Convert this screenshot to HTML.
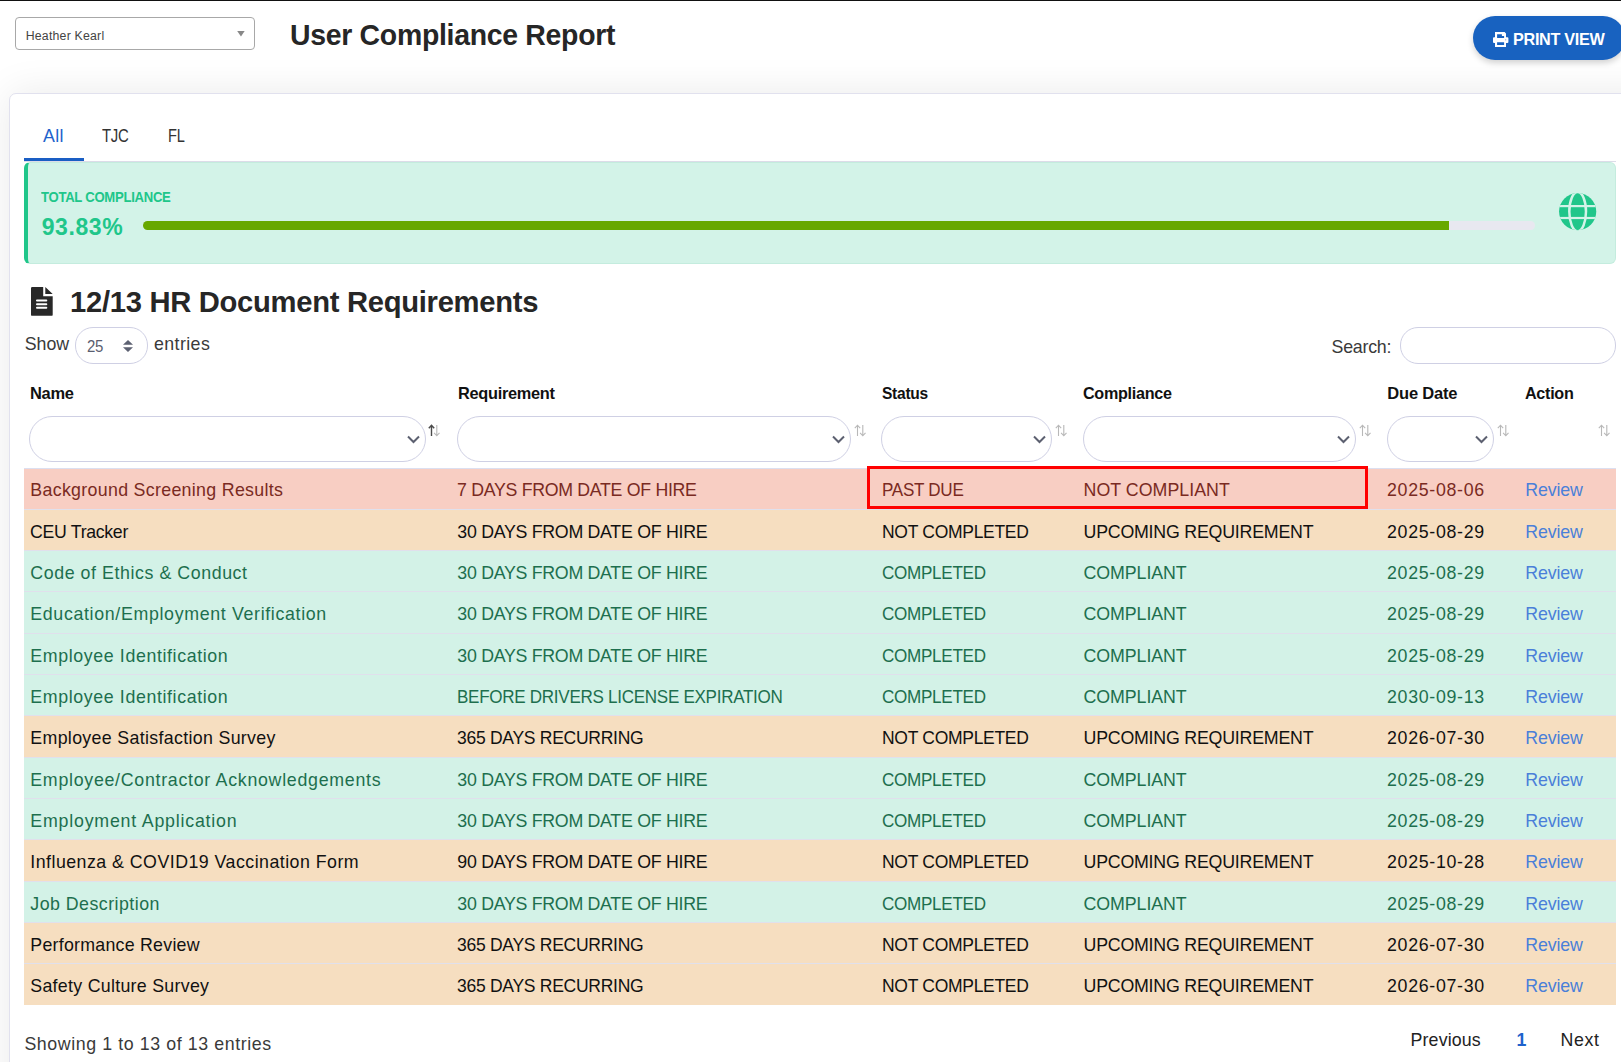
<!DOCTYPE html>
<html><head><meta charset="utf-8"><title>User Compliance Report</title>
<style>
html,body{margin:0;padding:0;}
body{width:1621px;height:1062px;position:relative;overflow:hidden;background:#fff;font-family:"Liberation Sans", sans-serif;}
.t{position:absolute;white-space:nowrap;line-height:1;}
</style></head><body>
<div style="position:absolute;left:0;top:0;width:1621px;height:1px;background:#111"></div>
<div style="position:absolute;left:9px;top:93px;width:1660px;height:1100px;border:1px solid #e1e1ee;border-radius:7px;background:#fff;box-shadow:0 0 40px rgba(0,0,0,0.085)"></div>
<div style="position:absolute;left:15px;top:17px;width:238px;height:31px;border:1px solid #a8a8a8;border-radius:4px;background:#fff"></div>
<div class="t" style="left:25.70px;top:30px;font-size:12.3px;color:#444;letter-spacing:0.217px;">Heather Kearl</div>
<svg style="position:absolute;left:236px;top:30px" width="10" height="8" viewBox="0 0 10 8"><path d="M1.2 1.1H8.7L4.95 6.4Z" fill="#888"/></svg>
<div class="t" style="left:290.40px;top:20px;font-size:29.6px;color:#262626;font-weight:bold;letter-spacing:-0.300px;transform:scaleX(0.9599);transform-origin:0.00px 0;">User Compliance Report</div>
<div style="position:absolute;left:1473px;top:16px;width:152px;height:44px;border-radius:22px;background:#1862c0;box-shadow:0 3px 6px rgba(0,0,0,0.18)"></div>
<svg style="position:absolute;left:1492.8px;top:31.8px" width="16" height="15" viewBox="0 0 16 15">
<path fill="#fff" fill-rule="evenodd" d="M2 0H11.6L13 1.4V5.3H14.4Q15.4 5.3 15.4 6.3V10.1Q15.4 11.1 14.4 11.1H13V15H2V11.1H1Q0 11.1 0 10.1V6.3Q0 5.3 1 5.3H2Z M4.1 2.2H8.9V4.1H11.1V6.1H4.1Z M4.1 10.3H11.1V13H4.1Z"/>
<circle cx="12.7" cy="7.8" r="0.6" fill="#7f9be0"/></svg>
<div class="t" style="left:1512.60px;top:31px;font-size:16.5px;color:#fff;font-weight:bold;letter-spacing:-0.300px;transform:scaleX(0.9818);transform-origin:0.00px 0;">PRINT VIEW</div>
<div class="t" style="left:43.10px;top:128px;font-size:17.8px;color:#1e62cc;letter-spacing:0.350px;">All</div>
<div class="t" style="left:102.20px;top:128px;font-size:17.8px;color:#333;letter-spacing:-0.300px;transform:scaleX(0.8393);transform-origin:0.00px 0;">TJC</div>
<div class="t" style="left:167.90px;top:128px;font-size:17.8px;color:#333;letter-spacing:-0.300px;transform:scaleX(0.8215);transform-origin:0.00px 0;">FL</div>
<div style="position:absolute;left:24px;top:161px;width:1592px;height:1px;background:#dcdce8"></div>
<div style="position:absolute;left:24px;top:158px;width:60px;height:3px;background:#1a5ec4"></div>
<div style="position:absolute;left:24px;top:162px;width:1592px;height:102px;box-sizing:border-box;background:#d3f3e8;border:1px solid #c4ecde;border-left:4px solid #20c68a;border-radius:6px"></div>
<div class="t" style="left:41.20px;top:190px;font-size:14.0px;color:#20c68a;font-weight:bold;letter-spacing:-0.300px;transform:scaleX(0.9365);transform-origin:0.00px 0;">TOTAL COMPLIANCE</div>
<div class="t" style="left:41.70px;top:216px;font-size:23.0px;color:#20c68a;font-weight:bold;letter-spacing:0.600px;">93.83%</div>
<div style="position:absolute;left:143px;top:221px;width:1392px;height:9px;border-radius:4.5px;background:#e8e8f0;overflow:hidden"><div style="width:1306px;height:9px;background:#67a800"></div></div>
<svg style="position:absolute;left:1558.8px;top:192.8px" width="38" height="38" viewBox="0 0 38 38">
<defs><clipPath id="gc"><circle cx="18.65" cy="18.6" r="18.6"/></clipPath></defs>
<g clip-path="url(#gc)">
<rect x="0" y="0" width="38" height="38" fill="#20c68a"/>
<ellipse cx="18.65" cy="18.6" rx="8.35" ry="19.6" fill="none" stroke="#d3f3e8" stroke-width="2.5"/>
<rect x="0" y="12.0" width="38" height="2.2" fill="#d3f3e8"/>
<rect x="0" y="23.9" width="38" height="2.2" fill="#d3f3e8"/>
</g></svg>
<svg style="position:absolute;left:31px;top:286.65px" width="22" height="29" viewBox="0 0 22 29">
<path fill="#282828" d="M0 1.2Q0 0 1.2 0H12.2V9.15H21.7V27.65Q21.7 28.85 20.5 28.85H1.2Q0 28.85 0 27.65Z M14.3 0L21.7 6.95H14.3Z"/>
<rect x="5" y="12.55" width="11.3" height="1.95" rx="0.95" fill="#fff"/>
<rect x="5" y="16.25" width="11.3" height="1.95" rx="0.95" fill="#fff"/>
<rect x="5" y="19.85" width="11.3" height="1.95" rx="0.95" fill="#fff"/>
</svg>
<div class="t" style="left:70.30px;top:287px;font-size:29.6px;color:#262626;font-weight:bold;letter-spacing:-0.300px;transform:scaleX(0.9865);transform-origin:0.00px 0;">12/13 HR Document Requirements</div>
<div class="t" style="left:24.70px;top:336px;font-size:17.8px;color:#3a3a3a;letter-spacing:-0.017px;">Show</div>
<div style="position:absolute;left:75px;top:327px;width:71px;height:35px;border:1px solid #cfd0e4;border-radius:18px;background:#fff"></div>
<div class="t" style="left:86.60px;top:338px;font-size:16.5px;color:#5a5e70;letter-spacing:-0.300px;transform:scaleX(0.9086);transform-origin:0.00px 0;">25</div>
<svg style="position:absolute;left:123px;top:340px" width="10" height="12" viewBox="0 0 10 12"><path fill="#5d6172" d="M5 0l5 4.8h-10z M0 7.2h10l-5 4.8z"/></svg>
<div class="t" style="left:153.90px;top:336px;font-size:17.8px;color:#3a3a3a;letter-spacing:0.425px;">entries</div>
<div class="t" style="left:1331.50px;top:339px;font-size:17.8px;color:#3a3a3a;letter-spacing:-0.225px;">Search:</div>
<div style="position:absolute;left:1400px;top:327px;width:214px;height:35px;border:1px solid #cfd0e4;border-radius:18px;background:#fff"></div>
<div class="t" style="left:30.40px;top:385px;font-size:16.5px;color:#111;font-weight:bold;letter-spacing:-0.300px;transform:scaleX(0.9966);transform-origin:0.00px 0;">Name</div>
<div style="position:absolute;left:29px;top:416px;width:395px;height:44px;border:1px solid #cfd0e4;border-radius:23px;background:#fff"></div>
<svg style="position:absolute;left:407px;top:435px" width="13" height="9" viewBox="0 0 13 9"><path d="M1 1.5l5.5 5.5 5.5-5.5" fill="none" stroke="#5c6070" stroke-width="2"/></svg>
<svg style="position:absolute;left:428px;top:424px" width="12" height="13" viewBox="0 0 12 13"><path d="M3.5 12V1.5M0.8 4.2L3.5 1.2 6.2 4.2" fill="none" stroke="#4a4a4a" stroke-width="1.4"/><path d="M8.8 1V11.5M6.1 8.8L8.8 11.8 11.5 8.8" fill="none" stroke="#b8b8b8" stroke-width="1.1"/></svg>
<div class="t" style="left:457.50px;top:385px;font-size:16.5px;color:#111;font-weight:bold;letter-spacing:-0.300px;transform:scaleX(0.9903);transform-origin:0.00px 0;">Requirement</div>
<div style="position:absolute;left:457px;top:416px;width:392px;height:44px;border:1px solid #cfd0e4;border-radius:23px;background:#fff"></div>
<svg style="position:absolute;left:832px;top:435px" width="13" height="9" viewBox="0 0 13 9"><path d="M1 1.5l5.5 5.5 5.5-5.5" fill="none" stroke="#5c6070" stroke-width="2"/></svg>
<svg style="position:absolute;left:854px;top:424px" width="12" height="13" viewBox="0 0 12 13"><path d="M3.5 12V1.5M0.8 4.2L3.5 1.2 6.2 4.2" fill="none" stroke="#b8b8b8" stroke-width="1.1"/><path d="M8.8 1V11.5M6.1 8.8L8.8 11.8 11.5 8.8" fill="none" stroke="#b8b8b8" stroke-width="1.1"/></svg>
<div class="t" style="left:881.80px;top:385px;font-size:16.5px;color:#111;font-weight:bold;letter-spacing:-0.300px;transform:scaleX(0.9438);transform-origin:0.00px 0;">Status</div>
<div style="position:absolute;left:881px;top:416px;width:169px;height:44px;border:1px solid #cfd0e4;border-radius:23px;background:#fff"></div>
<svg style="position:absolute;left:1033px;top:435px" width="13" height="9" viewBox="0 0 13 9"><path d="M1 1.5l5.5 5.5 5.5-5.5" fill="none" stroke="#5c6070" stroke-width="2"/></svg>
<svg style="position:absolute;left:1055px;top:424px" width="12" height="13" viewBox="0 0 12 13"><path d="M3.5 12V1.5M0.8 4.2L3.5 1.2 6.2 4.2" fill="none" stroke="#b8b8b8" stroke-width="1.1"/><path d="M8.8 1V11.5M6.1 8.8L8.8 11.8 11.5 8.8" fill="none" stroke="#b8b8b8" stroke-width="1.1"/></svg>
<div class="t" style="left:1083.40px;top:385px;font-size:16.5px;color:#111;font-weight:bold;letter-spacing:-0.300px;transform:scaleX(0.9791);transform-origin:0.00px 0;">Compliance</div>
<div style="position:absolute;left:1083px;top:416px;width:271px;height:44px;border:1px solid #cfd0e4;border-radius:23px;background:#fff"></div>
<svg style="position:absolute;left:1337px;top:435px" width="13" height="9" viewBox="0 0 13 9"><path d="M1 1.5l5.5 5.5 5.5-5.5" fill="none" stroke="#5c6070" stroke-width="2"/></svg>
<svg style="position:absolute;left:1359px;top:424px" width="12" height="13" viewBox="0 0 12 13"><path d="M3.5 12V1.5M0.8 4.2L3.5 1.2 6.2 4.2" fill="none" stroke="#b8b8b8" stroke-width="1.1"/><path d="M8.8 1V11.5M6.1 8.8L8.8 11.8 11.5 8.8" fill="none" stroke="#b8b8b8" stroke-width="1.1"/></svg>
<div class="t" style="left:1387.30px;top:385px;font-size:16.5px;color:#111;font-weight:bold;letter-spacing:-0.186px;">Due Date</div>
<div style="position:absolute;left:1387px;top:416px;width:105px;height:44px;border:1px solid #cfd0e4;border-radius:23px;background:#fff"></div>
<svg style="position:absolute;left:1475px;top:435px" width="13" height="9" viewBox="0 0 13 9"><path d="M1 1.5l5.5 5.5 5.5-5.5" fill="none" stroke="#5c6070" stroke-width="2"/></svg>
<svg style="position:absolute;left:1497px;top:424px" width="12" height="13" viewBox="0 0 12 13"><path d="M3.5 12V1.5M0.8 4.2L3.5 1.2 6.2 4.2" fill="none" stroke="#b8b8b8" stroke-width="1.1"/><path d="M8.8 1V11.5M6.1 8.8L8.8 11.8 11.5 8.8" fill="none" stroke="#b8b8b8" stroke-width="1.1"/></svg>
<div class="t" style="left:1524.80px;top:385px;font-size:16.5px;color:#111;font-weight:bold;letter-spacing:-0.300px;transform:scaleX(0.9789);transform-origin:0.00px 0;">Action</div>
<svg style="position:absolute;left:1598px;top:424px" width="12" height="13" viewBox="0 0 12 13"><path d="M3.5 12V1.5M0.8 4.2L3.5 1.2 6.2 4.2" fill="none" stroke="#b8b8b8" stroke-width="1.1"/><path d="M8.8 1V11.5M6.1 8.8L8.8 11.8 11.5 8.8" fill="none" stroke="#b8b8b8" stroke-width="1.1"/></svg>
<div style="position:absolute;left:24px;top:468px;width:1592px;height:1px;background:#dcdff0"></div>
<div style="position:absolute;left:24px;top:469px;width:1592px;height:40px;background:#f8cec3"></div>
<div class="t" style="left:30.30px;top:482px;font-size:17.8px;color:#7a2a22;letter-spacing:0.315px;">Background Screening Results</div>
<div class="t" style="left:457.30px;top:482px;font-size:17.8px;color:#7a2a22;letter-spacing:-0.300px;transform:scaleX(0.9981);transform-origin:0.00px 0;">7 DAYS FROM DATE OF HIRE</div>
<div class="t" style="left:882.30px;top:482px;font-size:17.8px;color:#7a2a22;letter-spacing:-0.300px;transform:scaleX(0.9601);transform-origin:0.00px 0;">PAST DUE</div>
<div class="t" style="left:1083.50px;top:482px;font-size:17.8px;color:#7a2a22;letter-spacing:0.037px;">NOT COMPLIANT</div>
<div class="t" style="left:1387.00px;top:482px;font-size:17.8px;color:#7a2a22;letter-spacing:0.694px;">2025-08-06</div>
<div class="t" style="left:1525.30px;top:482px;font-size:17.8px;color:#4a7fd9;letter-spacing:-0.160px;">Review</div>
<div style="position:absolute;left:24px;top:510px;width:1592px;height:40px;background:#f6dec0"></div>
<div style="position:absolute;left:24px;top:509px;width:1592px;height:1px;background:#e0e0ec"></div>
<div class="t" style="left:30.30px;top:524px;font-size:17.8px;color:#111;letter-spacing:-0.300px;transform:scaleX(0.9954);transform-origin:0.00px 0;">CEU Tracker</div>
<div class="t" style="left:457.30px;top:524px;font-size:17.8px;color:#111;letter-spacing:-0.290px;">30 DAYS FROM DATE OF HIRE</div>
<div class="t" style="left:882.30px;top:524px;font-size:17.8px;color:#111;letter-spacing:-0.300px;transform:scaleX(0.9843);transform-origin:0.00px 0;">NOT COMPLETED</div>
<div class="t" style="left:1083.50px;top:524px;font-size:17.8px;color:#111;letter-spacing:-0.213px;">UPCOMING REQUIREMENT</div>
<div class="t" style="left:1387.00px;top:524px;font-size:17.8px;color:#111;letter-spacing:0.694px;">2025-08-29</div>
<div class="t" style="left:1525.30px;top:524px;font-size:17.8px;color:#4a7fd9;letter-spacing:-0.160px;">Review</div>
<div style="position:absolute;left:24px;top:551px;width:1592px;height:40px;background:#d3f2e7"></div>
<div style="position:absolute;left:24px;top:550px;width:1592px;height:1px;background:#e0e0ec"></div>
<div class="t" style="left:30.30px;top:565px;font-size:17.8px;color:#1d6f4e;letter-spacing:0.570px;">Code of Ethics &amp; Conduct</div>
<div class="t" style="left:457.30px;top:565px;font-size:17.8px;color:#1d6f4e;letter-spacing:-0.290px;">30 DAYS FROM DATE OF HIRE</div>
<div class="t" style="left:882.30px;top:565px;font-size:17.8px;color:#1d6f4e;letter-spacing:-0.300px;transform:scaleX(0.9608);transform-origin:0.00px 0;">COMPLETED</div>
<div class="t" style="left:1083.50px;top:565px;font-size:17.8px;color:#1d6f4e;letter-spacing:-0.069px;">COMPLIANT</div>
<div class="t" style="left:1387.00px;top:565px;font-size:17.8px;color:#1d6f4e;letter-spacing:0.694px;">2025-08-29</div>
<div class="t" style="left:1525.30px;top:565px;font-size:17.8px;color:#4a7fd9;letter-spacing:-0.160px;">Review</div>
<div style="position:absolute;left:24px;top:592px;width:1592px;height:41px;background:#d3f2e7"></div>
<div style="position:absolute;left:24px;top:591px;width:1592px;height:1px;background:#e0e0ec"></div>
<div class="t" style="left:30.30px;top:606px;font-size:17.8px;color:#1d6f4e;letter-spacing:0.661px;">Education/Employment Verification</div>
<div class="t" style="left:457.30px;top:606px;font-size:17.8px;color:#1d6f4e;letter-spacing:-0.290px;">30 DAYS FROM DATE OF HIRE</div>
<div class="t" style="left:882.30px;top:606px;font-size:17.8px;color:#1d6f4e;letter-spacing:-0.300px;transform:scaleX(0.9608);transform-origin:0.00px 0;">COMPLETED</div>
<div class="t" style="left:1083.50px;top:606px;font-size:17.8px;color:#1d6f4e;letter-spacing:-0.069px;">COMPLIANT</div>
<div class="t" style="left:1387.00px;top:606px;font-size:17.8px;color:#1d6f4e;letter-spacing:0.694px;">2025-08-29</div>
<div class="t" style="left:1525.30px;top:606px;font-size:17.8px;color:#4a7fd9;letter-spacing:-0.160px;">Review</div>
<div style="position:absolute;left:24px;top:634px;width:1592px;height:40px;background:#d3f2e7"></div>
<div style="position:absolute;left:24px;top:633px;width:1592px;height:1px;background:#e0e0ec"></div>
<div class="t" style="left:30.30px;top:648px;font-size:17.8px;color:#1d6f4e;letter-spacing:0.616px;">Employee Identification</div>
<div class="t" style="left:457.30px;top:648px;font-size:17.8px;color:#1d6f4e;letter-spacing:-0.290px;">30 DAYS FROM DATE OF HIRE</div>
<div class="t" style="left:882.30px;top:648px;font-size:17.8px;color:#1d6f4e;letter-spacing:-0.300px;transform:scaleX(0.9608);transform-origin:0.00px 0;">COMPLETED</div>
<div class="t" style="left:1083.50px;top:648px;font-size:17.8px;color:#1d6f4e;letter-spacing:-0.069px;">COMPLIANT</div>
<div class="t" style="left:1387.00px;top:648px;font-size:17.8px;color:#1d6f4e;letter-spacing:0.694px;">2025-08-29</div>
<div class="t" style="left:1525.30px;top:648px;font-size:17.8px;color:#4a7fd9;letter-spacing:-0.160px;">Review</div>
<div style="position:absolute;left:24px;top:675px;width:1592px;height:40px;background:#d3f2e7"></div>
<div style="position:absolute;left:24px;top:674px;width:1592px;height:1px;background:#e0e0ec"></div>
<div class="t" style="left:30.30px;top:689px;font-size:17.8px;color:#1d6f4e;letter-spacing:0.616px;">Employee Identification</div>
<div class="t" style="left:457.30px;top:689px;font-size:17.8px;color:#1d6f4e;letter-spacing:-0.300px;transform:scaleX(0.9588);transform-origin:0.00px 0;">BEFORE DRIVERS LICENSE EXPIRATION</div>
<div class="t" style="left:882.30px;top:689px;font-size:17.8px;color:#1d6f4e;letter-spacing:-0.300px;transform:scaleX(0.9608);transform-origin:0.00px 0;">COMPLETED</div>
<div class="t" style="left:1083.50px;top:689px;font-size:17.8px;color:#1d6f4e;letter-spacing:-0.069px;">COMPLIANT</div>
<div class="t" style="left:1387.00px;top:689px;font-size:17.8px;color:#1d6f4e;letter-spacing:0.694px;">2030-09-13</div>
<div class="t" style="left:1525.30px;top:689px;font-size:17.8px;color:#4a7fd9;letter-spacing:-0.160px;">Review</div>
<div style="position:absolute;left:24px;top:716px;width:1592px;height:41px;background:#f6dec0"></div>
<div style="position:absolute;left:24px;top:715px;width:1592px;height:1px;background:#e0e0ec"></div>
<div class="t" style="left:30.30px;top:730px;font-size:17.8px;color:#111;letter-spacing:0.331px;">Employee Satisfaction Survey</div>
<div class="t" style="left:457.30px;top:730px;font-size:17.8px;color:#111;letter-spacing:-0.300px;transform:scaleX(0.9865);transform-origin:0.00px 0;">365 DAYS RECURRING</div>
<div class="t" style="left:882.30px;top:730px;font-size:17.8px;color:#111;letter-spacing:-0.300px;transform:scaleX(0.9843);transform-origin:0.00px 0;">NOT COMPLETED</div>
<div class="t" style="left:1083.50px;top:730px;font-size:17.8px;color:#111;letter-spacing:-0.213px;">UPCOMING REQUIREMENT</div>
<div class="t" style="left:1387.00px;top:730px;font-size:17.8px;color:#111;letter-spacing:0.694px;">2026-07-30</div>
<div class="t" style="left:1525.30px;top:730px;font-size:17.8px;color:#4a7fd9;letter-spacing:-0.160px;">Review</div>
<div style="position:absolute;left:24px;top:758px;width:1592px;height:40px;background:#d3f2e7"></div>
<div style="position:absolute;left:24px;top:757px;width:1592px;height:1px;background:#e0e0ec"></div>
<div class="t" style="left:30.30px;top:772px;font-size:17.8px;color:#1d6f4e;letter-spacing:0.717px;">Employee/Contractor Acknowledgements</div>
<div class="t" style="left:457.30px;top:772px;font-size:17.8px;color:#1d6f4e;letter-spacing:-0.290px;">30 DAYS FROM DATE OF HIRE</div>
<div class="t" style="left:882.30px;top:772px;font-size:17.8px;color:#1d6f4e;letter-spacing:-0.300px;transform:scaleX(0.9608);transform-origin:0.00px 0;">COMPLETED</div>
<div class="t" style="left:1083.50px;top:772px;font-size:17.8px;color:#1d6f4e;letter-spacing:-0.069px;">COMPLIANT</div>
<div class="t" style="left:1387.00px;top:772px;font-size:17.8px;color:#1d6f4e;letter-spacing:0.694px;">2025-08-29</div>
<div class="t" style="left:1525.30px;top:772px;font-size:17.8px;color:#4a7fd9;letter-spacing:-0.160px;">Review</div>
<div style="position:absolute;left:24px;top:799px;width:1592px;height:40px;background:#d3f2e7"></div>
<div style="position:absolute;left:24px;top:798px;width:1592px;height:1px;background:#e0e0ec"></div>
<div class="t" style="left:30.30px;top:813px;font-size:17.8px;color:#1d6f4e;letter-spacing:0.788px;">Employment Application</div>
<div class="t" style="left:457.30px;top:813px;font-size:17.8px;color:#1d6f4e;letter-spacing:-0.290px;">30 DAYS FROM DATE OF HIRE</div>
<div class="t" style="left:882.30px;top:813px;font-size:17.8px;color:#1d6f4e;letter-spacing:-0.300px;transform:scaleX(0.9608);transform-origin:0.00px 0;">COMPLETED</div>
<div class="t" style="left:1083.50px;top:813px;font-size:17.8px;color:#1d6f4e;letter-spacing:-0.069px;">COMPLIANT</div>
<div class="t" style="left:1387.00px;top:813px;font-size:17.8px;color:#1d6f4e;letter-spacing:0.694px;">2025-08-29</div>
<div class="t" style="left:1525.30px;top:813px;font-size:17.8px;color:#4a7fd9;letter-spacing:-0.160px;">Review</div>
<div style="position:absolute;left:24px;top:840px;width:1592px;height:41px;background:#f6dec0"></div>
<div style="position:absolute;left:24px;top:839px;width:1592px;height:1px;background:#e0e0ec"></div>
<div class="t" style="left:30.30px;top:854px;font-size:17.8px;color:#111;letter-spacing:0.466px;">Influenza &amp; COVID19 Vaccination Form</div>
<div class="t" style="left:457.30px;top:854px;font-size:17.8px;color:#111;letter-spacing:-0.290px;">90 DAYS FROM DATE OF HIRE</div>
<div class="t" style="left:882.30px;top:854px;font-size:17.8px;color:#111;letter-spacing:-0.300px;transform:scaleX(0.9843);transform-origin:0.00px 0;">NOT COMPLETED</div>
<div class="t" style="left:1083.50px;top:854px;font-size:17.8px;color:#111;letter-spacing:-0.213px;">UPCOMING REQUIREMENT</div>
<div class="t" style="left:1387.00px;top:854px;font-size:17.8px;color:#111;letter-spacing:0.694px;">2025-10-28</div>
<div class="t" style="left:1525.30px;top:854px;font-size:17.8px;color:#4a7fd9;letter-spacing:-0.160px;">Review</div>
<div style="position:absolute;left:24px;top:882px;width:1592px;height:40px;background:#d3f2e7"></div>
<div style="position:absolute;left:24px;top:881px;width:1592px;height:1px;background:#e0e0ec"></div>
<div class="t" style="left:30.30px;top:896px;font-size:17.8px;color:#1d6f4e;letter-spacing:0.471px;">Job Description</div>
<div class="t" style="left:457.30px;top:896px;font-size:17.8px;color:#1d6f4e;letter-spacing:-0.290px;">30 DAYS FROM DATE OF HIRE</div>
<div class="t" style="left:882.30px;top:896px;font-size:17.8px;color:#1d6f4e;letter-spacing:-0.300px;transform:scaleX(0.9608);transform-origin:0.00px 0;">COMPLETED</div>
<div class="t" style="left:1083.50px;top:896px;font-size:17.8px;color:#1d6f4e;letter-spacing:-0.069px;">COMPLIANT</div>
<div class="t" style="left:1387.00px;top:896px;font-size:17.8px;color:#1d6f4e;letter-spacing:0.694px;">2025-08-29</div>
<div class="t" style="left:1525.30px;top:896px;font-size:17.8px;color:#4a7fd9;letter-spacing:-0.160px;">Review</div>
<div style="position:absolute;left:24px;top:923px;width:1592px;height:40px;background:#f6dec0"></div>
<div style="position:absolute;left:24px;top:922px;width:1592px;height:1px;background:#e0e0ec"></div>
<div class="t" style="left:30.30px;top:937px;font-size:17.8px;color:#111;letter-spacing:0.250px;">Performance Review</div>
<div class="t" style="left:457.30px;top:937px;font-size:17.8px;color:#111;letter-spacing:-0.300px;transform:scaleX(0.9865);transform-origin:0.00px 0;">365 DAYS RECURRING</div>
<div class="t" style="left:882.30px;top:937px;font-size:17.8px;color:#111;letter-spacing:-0.300px;transform:scaleX(0.9843);transform-origin:0.00px 0;">NOT COMPLETED</div>
<div class="t" style="left:1083.50px;top:937px;font-size:17.8px;color:#111;letter-spacing:-0.213px;">UPCOMING REQUIREMENT</div>
<div class="t" style="left:1387.00px;top:937px;font-size:17.8px;color:#111;letter-spacing:0.694px;">2026-07-30</div>
<div class="t" style="left:1525.30px;top:937px;font-size:17.8px;color:#4a7fd9;letter-spacing:-0.160px;">Review</div>
<div style="position:absolute;left:24px;top:964px;width:1592px;height:41px;background:#f6dec0"></div>
<div style="position:absolute;left:24px;top:963px;width:1592px;height:1px;background:#e0e0ec"></div>
<div class="t" style="left:30.30px;top:978px;font-size:17.8px;color:#111;letter-spacing:0.287px;">Safety Culture Survey</div>
<div class="t" style="left:457.30px;top:978px;font-size:17.8px;color:#111;letter-spacing:-0.300px;transform:scaleX(0.9865);transform-origin:0.00px 0;">365 DAYS RECURRING</div>
<div class="t" style="left:882.30px;top:978px;font-size:17.8px;color:#111;letter-spacing:-0.300px;transform:scaleX(0.9843);transform-origin:0.00px 0;">NOT COMPLETED</div>
<div class="t" style="left:1083.50px;top:978px;font-size:17.8px;color:#111;letter-spacing:-0.213px;">UPCOMING REQUIREMENT</div>
<div class="t" style="left:1387.00px;top:978px;font-size:17.8px;color:#111;letter-spacing:0.694px;">2026-07-30</div>
<div class="t" style="left:1525.30px;top:978px;font-size:17.8px;color:#4a7fd9;letter-spacing:-0.160px;">Review</div>
<div style="position:absolute;left:867px;top:466px;width:495px;height:37px;border:3px solid #ff0000"></div>
<div class="t" style="left:24.40px;top:1036px;font-size:17.8px;color:#3a3a3a;letter-spacing:0.584px;">Showing 1 to 13 of 13 entries</div>
<div class="t" style="left:1410.60px;top:1032px;font-size:17.8px;color:#222;letter-spacing:0.121px;">Previous</div>
<div class="t" style="left:1516.60px;top:1032px;font-size:17.8px;color:#1e62cc;font-weight:bold;">1</div>
<div class="t" style="left:1560.60px;top:1032px;font-size:17.8px;color:#222;letter-spacing:0.600px;">Next</div>
</body></html>
